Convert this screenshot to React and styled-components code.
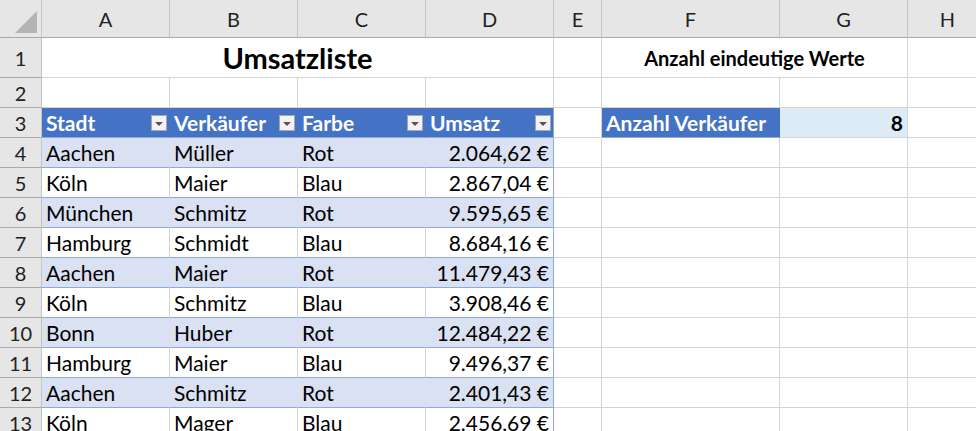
import React from "react";
import styled, { createGlobalStyle } from "styled-components";

const Global = createGlobalStyle`
  body { margin: 0; background: #fff; font-family: Lato, "Open Sans", sans-serif; overflow: hidden; }
`;

const Sheet = styled.div`
  display: grid;
  grid-template-columns: 42px 128px 128px 128px 128px 48px 178px 128px 80px;
  grid-template-rows: 38px 40px 30px repeat(11, 30px);
  width: 976px; height: 431px; overflow: hidden;
`;

const Cell = styled.div`
  box-sizing: border-box;
  display: flex; align-items: center;
  justify-content: ${p => p.$align === "right" ? "flex-end" : p.$align === "center" ? "center" : "flex-start"};
  padding: 0 4px;
  font-size: 21px; color: #000;
  white-space: nowrap; overflow: hidden;
  border-right: 1px solid #d4d4d4;
  border-bottom: 1px solid #d4d4d4;
  background: ${p => p.$bg || "#fff"};
  ${p => p.$span ? `grid-column: span ${p.$span};` : ""}
  ${p => p.$bold ? "font-weight: 700;" : ""}
  ${p => p.$white ? "color: #fff;" : ""}
  ${p => p.$size ? `font-size: ${p.$size}px;` : ""}
  ${p => p.$tb ? "border-bottom-color: #8ea9db;" : ""}
  ${p => p.$tr ? "border-right-color: #8ea9db;" : ""}
  ${p => p.$noRight ? "border-right-color: transparent;" : ""}
  position: relative;
`;

const Head = styled(Cell)`
  background: #e6e6e6;
  justify-content: center;
  color: #222;
  font-size: 20px;
  border-right-color: #c4c4c4;
  border-bottom-color: #a8a8a8;
`;

const RowHead = styled(Head)``;

const Corner = styled(Head)`
  align-items: flex-end; justify-content: flex-end; padding: 4px;
`;

const Tri = styled.div`
  width: 0; height: 0;
  border-left: 22px solid transparent;
  border-bottom: 22px solid #b4b4b4;
`;

const Filter = styled.span`
  position: absolute; right: 2px; top: 7px;
  width: 16px; height: 16px; box-sizing: border-box;
  background: #f3f3f3; border: 1px solid #a8a8a8;
  display: flex; align-items: center; justify-content: center;
  &::after { content: ""; border-left: 4px solid transparent; border-right: 4px solid transparent; border-top: 4px solid #555; margin-top: 2px; }
`;

const cols = ["A","B","C","D","E","F","G","H"];
const data = [
  ["Aachen","Müller","Rot","2.064,62 €"],
  ["Köln","Maier","Blau","2.867,04 €"],
  ["München","Schmitz","Rot","9.595,65 €"],
  ["Hamburg","Schmidt","Blau","8.684,16 €"],
  ["Aachen","Maier","Rot","11.479,43 €"],
  ["Köln","Schmitz","Blau","3.908,46 €"],
  ["Bonn","Huber","Rot","12.484,22 €"],
  ["Hamburg","Maier","Blau","9.496,37 €"],
  ["Aachen","Schmitz","Rot","2.401,43 €"],
  ["Köln","Mager","Blau","2.456,69 €"],
];

const Blank = (props) => <Cell {...props} />;

export default function App() {
  return (
    <>
      <Global />
      <Sheet>
        <Corner><Tri /></Corner>
        {cols.map(c => <Head key={c}>{c}</Head>)}

        <RowHead>1</RowHead>
        <Cell $span={4} $align="center" $bold $size={29}>Umsatzliste</Cell>
        <Blank />
        <Cell $span={2} $align="center" $bold $size={20}>Anzahl eindeutige Werte</Cell>
        <Blank />

        <RowHead>2</RowHead>
        {[0,1,2,3,4,5,6,7].map(i => <Blank key={i} />)}

        <RowHead>3</RowHead>
        {["Stadt","Verkäufer","Farbe","Umsatz"].map((h, i) => (
          <Cell key={h} $bg="#4472c4" $white $bold $noRight={i<3} $tb $tr={i===3}>{h}<Filter /></Cell>
        ))}
        <Blank />
        <Cell $bg="#4472c4" $white $bold $noRight $tb>Anzahl Verkäufer</Cell>
        <Cell $bg="#ddebf7" $bold $align="right">8</Cell>
        <Blank />

        {data.map((r, ri) => {
          const bg = ri % 2 === 0 ? "#d9e1f2" : "#fff";
          return (
            <React.Fragment key={ri}>
              <RowHead>{ri + 4}</RowHead>
              {r.map((v, ci) => (
                <Cell key={ci} $bg={bg} $tb $noRight={ci<3 && ri%2===0} $tr={ci===3} $align={ci===3 ? "right" : "left"}>{v}</Cell>
              ))}
              <Blank /><Blank /><Blank /><Blank />
            </React.Fragment>
          );
        })}
      </Sheet>
    </>
  );
}
